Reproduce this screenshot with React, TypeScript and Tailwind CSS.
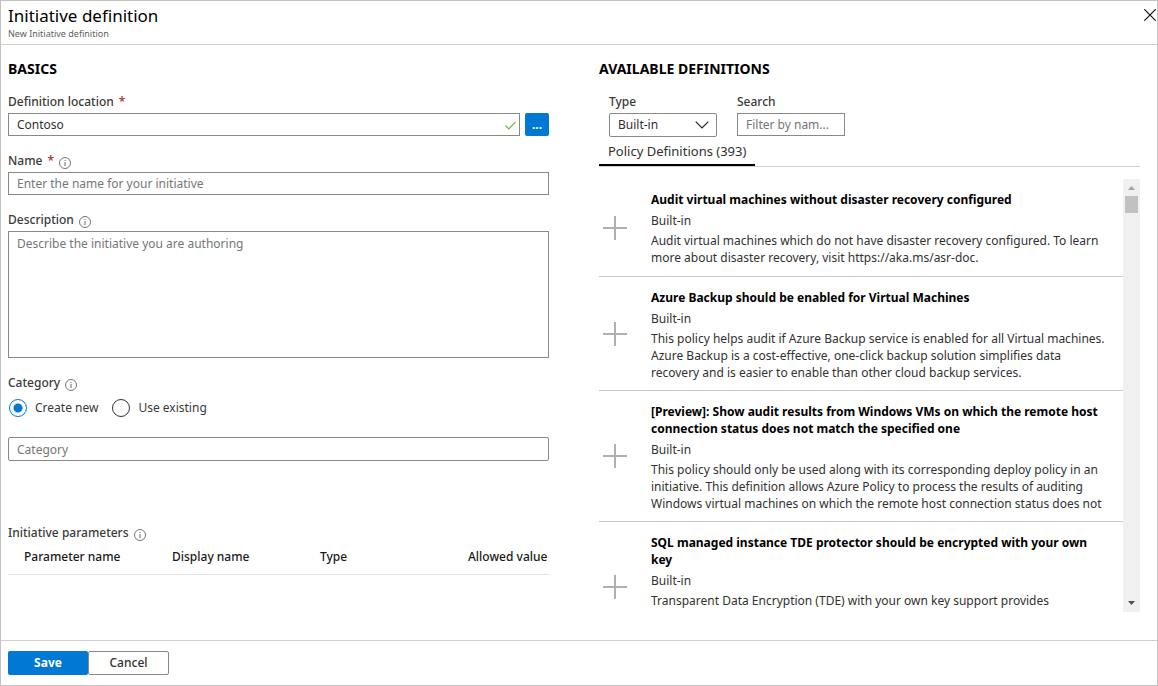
import { useState } from "react";

type Definition = { title: string; kind: string; text: string };

const definitions: Definition[] = [
  {
    title: "Audit virtual machines without disaster recovery configured",
    kind: "Built-in",
    text: "Audit virtual machines which do not have disaster recovery configured. To learn more about disaster recovery, visit https://aka.ms/asr-doc.",
  },
  {
    title: "Azure Backup should be enabled for Virtual Machines",
    kind: "Built-in",
    text: "This policy helps audit if Azure Backup service is enabled for all Virtual machines. Azure Backup is a cost-effective, one-click backup solution simplifies data recovery and is easier to enable than other cloud backup services.",
  },
  {
    title:
      "[Preview]: Show audit results from Windows VMs on which the remote host connection status does not match the specified one",
    kind: "Built-in",
    text: "This policy should only be used along with its corresponding deploy policy in an initiative. This definition allows Azure Policy to process the results of auditing Windows virtual machines on which the remote host connection status does not",
  },
  {
    title: "SQL managed instance TDE protector should be encrypted with your own key",
    kind: "Built-in",
    text: "Transparent Data Encryption (TDE) with your own key support provides",
  },
];

function InfoIcon() {
  return (
    <svg className="mt-[3px] size-3 shrink-0" viewBox="0 0 12 12" fill="none" stroke="#666" aria-hidden="true">
      <circle cx="6" cy="6" r="5.5" strokeWidth="0.9" />
      <path d="M6 5v4M6 3v1" strokeWidth="1" />
    </svg>
  );
}

function Required() {
  return <span className="text-[#b3262f]">*</span>;
}

const labelClass = "flex h-[18px] items-center gap-[5px] text-[12px] leading-[18px] font-medium text-[#3b3a39]";
const boxClass =
  "block w-full min-w-0 border border-[#8a8886] bg-white px-2 text-[12px] leading-4 text-[#323130] placeholder:text-[#767676] outline-none focus:border-[#0078d4]";

function Radio({ id, label, checked, onChange }: { id: string; label: string; checked: boolean; onChange: () => void }) {
  return (
    <span className="flex items-center gap-2">
      <input
        id={id}
        type="radio"
        name="category-mode"
        checked={checked}
        onChange={onChange}
        className="peer m-0 size-[18px] appearance-none rounded-full border border-[#323130] bg-white checked:border-[#0078d4] checked:bg-[radial-gradient(circle,#0078d4_4px,#fff_5px)]"
      />
      <label htmlFor={id} className="text-[12px] leading-[18px] text-[#3b3a39]">
        {label}
      </label>
    </span>
  );
}

function DefinitionRow({ item }: { item: Definition }) {
  return (
    <li className="flex min-h-[98px] items-center gap-6 border-b border-[#c8c8c8] pl-1 last:min-h-[131px]">
      <button type="button" aria-label="Add definition" className="size-6 shrink-0">
        <svg className="size-6" viewBox="0 0 24 24" stroke="#b0b0b0" strokeWidth="2" aria-hidden="true">
          <path d="M12 0v24M0 12h24" />
        </svg>
      </button>
      <div className="min-w-0 flex-1 self-start pt-3 pr-3.5 pb-[9px] text-[12px] leading-[17px]">
        <h3 className="font-bold text-black">{item.title}</h3>
        <p className="mt-1 text-[#323130]">{item.kind}</p>
        <p className="mt-[3px] line-clamp-3 text-[#323130]">{item.text}</p>
      </div>
    </li>
  );
}

export default function App() {
  const [mode, setMode] = useState("new");
  return (
    <div className="flex min-h-screen flex-col border border-[#c3c3c3] bg-white font-['Noto_Sans','Open_Sans',sans-serif]">
      <header className="flex items-start justify-between border-b border-[#d2d0ce] pl-[7px]">
        <div className="pt-1 pb-1">
          <h1 className="text-[17px] leading-[22px] text-black">Initiative definition</h1>
          <p className="text-[9px] leading-[13px] text-[#605e5c]">New Initiative definition</p>
        </div>
        <button type="button" aria-label="Close" className="mt-2 mr-px">
          <svg className="size-3" viewBox="0 0 12 12" stroke="#111" strokeWidth="1.2" aria-hidden="true">
            <path d="M0.3 0.3l11.4 11.4M11.7 0.3L0.3 11.7" />
          </svg>
        </button>
      </header>

      <main className="grid flex-1 grid-cols-2 gap-[50px] pt-3.5 pr-[17px] pb-7 pl-[7px]">
        <section className="min-w-0">
          <h2 className="text-[14px] leading-5 font-bold text-black">BASICS</h2>

          <div className="mt-3.5">
            <label htmlFor="location" className={labelClass}>
              Definition location <Required />
            </label>
            <div className="mt-0.5 flex gap-[5px]">
              <div className="relative min-w-0 flex-1">
                <input id="location" defaultValue="Contoso" className={`${boxClass} h-[23px]`} />
                <svg
                  className="absolute top-[8px] right-1 h-[9px] w-[11px]"
                  viewBox="0 0 11 9"
                  fill="none"
                  stroke="#6bb536"
                  strokeWidth="1.2"
                  aria-hidden="true"
                >
                  <path d="M0.5 4.5L3.8 7.8L10.5 0.8" />
                </svg>
              </div>
              <button
                type="button"
                aria-label="Browse locations"
                className="h-[23px] w-6 rounded-[2px] bg-[#0078d4] text-[12px] leading-5 font-bold text-white"
              >
                ...
              </button>
            </div>
          </div>

          <div className="mt-4">
            <label htmlFor="name" className={labelClass}>
              Name <Required /> <InfoIcon />
            </label>
            <input id="name" placeholder="Enter the name for your initiative" className={`${boxClass} mt-0.5 h-[23px]`} />
          </div>

          <div className="mt-4">
            <label htmlFor="description" className={labelClass}>
              Description <InfoIcon />
            </label>
            <textarea
              id="description"
              placeholder="Describe the initiative you are authoring"
              className={`${boxClass} mt-0.5 h-[127px] resize-none py-1`}
            />
          </div>

          <div className="mt-4">
            <label htmlFor="category" className={labelClass}>
              Category <InfoIcon />
            </label>
            <div className="mt-[7px] flex gap-3.5 pl-px">
              <Radio id="mode-new" label="Create new" checked={mode === "new"} onChange={() => setMode("new")} />
              <Radio id="mode-existing" label="Use existing" checked={mode === "existing"} onChange={() => setMode("existing")} />
            </div>
            <input id="category" placeholder="Category" className={`${boxClass} mt-5 h-6 rounded-[2px]`} />
          </div>

          <div className="mt-[63px] overflow-hidden">
            <h3 id="parameters" className={labelClass}>
              Initiative parameters <InfoIcon />
            </h3>
            <table aria-labelledby="parameters" className="w-[592px] table-fixed border-collapse text-left">
              <thead>
                <tr className="border-b border-[#e6e6e6] text-[12px] leading-[18px] text-[#1b1a19]">
                  <th className="pt-1.5 pb-2 pl-4 font-medium">Parameter name</th>
                  <th className="pt-1.5 pb-2 pl-4 font-medium">Display name</th>
                  <th className="pt-1.5 pb-2 pl-4 font-medium">Type</th>
                  <th className="pt-1.5 pb-2 pl-4 font-medium whitespace-nowrap">Allowed value</th>
                </tr>
              </thead>
            </table>
          </div>
        </section>

        <section className="flex min-w-0 flex-col">
          <h2 className="text-[14px] leading-5 font-bold text-black">AVAILABLE DEFINITIONS</h2>

          <div className="mt-3.5 flex gap-5 pl-2.5">
            <div className="w-[108px]">
              <label htmlFor="type" className={labelClass}>
                Type
              </label>
              <div className="relative mt-0.5">
                <select id="type" className={`${boxClass} h-6 appearance-none rounded-[2px]`}>
                  <option>Built-in</option>
                  <option>Custom</option>
                </select>
                <svg
                  className="pointer-events-none absolute top-2 right-2 h-2 w-3.5"
                  viewBox="0 0 14 8"
                  fill="none"
                  stroke="#222"
                  strokeWidth="1.2"
                  aria-hidden="true"
                >
                  <path d="M0.7 0.7L7 7L13.3 0.7" />
                </svg>
              </div>
            </div>
            <div className="w-[108px]">
              <label htmlFor="search" className={labelClass}>
                Search
              </label>
              <input id="search" placeholder="Filter by nam..." className={`${boxClass} mt-0.5 h-[23px]`} />
            </div>
          </div>

          <div role="tablist" className="flex border-b border-[#d0d0d0]">
            <button
              type="button"
              role="tab"
              aria-selected="true"
              className="border-b-2 border-black px-[9px] pt-[5px] pb-1 text-[13px] leading-[18px] text-[#323130]"
            >
              Policy Definitions (393)
            </button>
          </div>

          <div className="mt-3 flex min-h-[400px] flex-1 basis-0">
            <ul className="h-0 min-h-full min-w-0 flex-1 overflow-y-auto [scrollbar-width:none]">
              {definitions.map((item) => (
                <DefinitionRow key={item.title} item={item} />
              ))}
            </ul>
            <div className="flex w-[17px] flex-col items-center bg-[#f0f0f0]" aria-hidden="true">
              <svg className="h-[17px] w-[17px]" viewBox="0 0 17 17" fill="#a3a3a3">
                <path d="M5 11h7L8.5 7z" />
              </svg>
              <div className="h-[17px] w-[13px] bg-[#c1c1c1]" />
              <svg className="mt-auto h-[17px] w-[17px]" viewBox="0 0 17 17" fill="#505050">
                <path d="M5 6h7L8.5 10z" />
              </svg>
            </div>
          </div>
        </section>
      </main>

      <footer className="flex border-t border-[#d2d0ce] py-2.5 pl-[7px] text-[12px] leading-4">
        <button type="button" className="h-6 w-20 rounded-[2px] bg-[#0078d4] font-bold text-white">
          Save
        </button>
        <button type="button" className="h-6 w-[81px] rounded-[2px] border border-[#8a8886] bg-white font-medium text-[#323130]">
          Cancel
        </button>
      </footer>
    </div>
  );
}
